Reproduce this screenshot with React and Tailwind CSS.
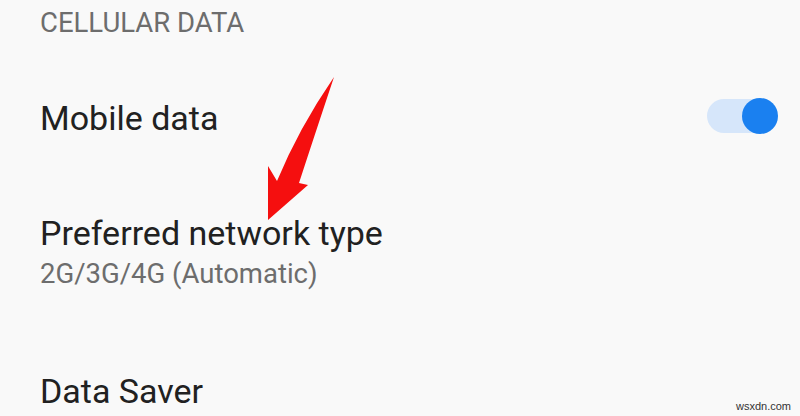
export default function App() {
  return (
    <div
      className="relative w-[800px] h-[416px] overflow-hidden bg-[#f9f9f9] pl-[40px]"
      style={{ fontFamily: 'Roboto, "Noto Sans", sans-serif' }}
    >
      {/* Section header */}
      <div className="pt-[7px] text-[27.5px] leading-[32px] text-[#6d6d6d]">CELLULAR DATA</div>

      {/* Mobile data row */}
      <div className="mt-[59px] flex items-start justify-between pr-[22px]">
        <div className="text-[34px] leading-[40px] text-[#212121]">Mobile data</div>
        <div className="relative w-[71px] h-[36px]">
          <div className="absolute left-0 top-[1px] w-[64px] h-[34px] rounded-full bg-[#d6e6fa]" />
          <div className="absolute right-0 top-0 w-[36px] h-[36px] rounded-full bg-[#1a80f0]" />
        </div>
      </div>

      {/* Preferred network type */}
      <div className="mt-[75px]">
        <div className="text-[34px] leading-[40px] text-[#212121]">Preferred network type</div>
        <div className="mt-[5px] text-[27.5px] leading-[32px] text-[#6d6d6d]">2G/3G/4G (Automatic)</div>
      </div>

      {/* Data Saver */}
      <div className="mt-[81px] text-[34px] leading-[40px] text-[#212121]">Data Saver</div>

      {/* red annotation arrow */}
      <svg className="absolute left-0 top-0" width="800" height="416" viewBox="0 0 800 416">
        <path
          d="M334 77 Q313 140 299 183 L308 185 L268 220 L268 166 L277 181 Q299 128 334 77 Z"
          fill="#f50f0f"
        />
      </svg>

      <div
        className="absolute right-[9px] bottom-[3px] text-[11px] leading-[13px] text-[#333]"
        style={{ fontFamily: '"Liberation Sans", Arial, sans-serif' }}
      >
        wsxdn.com
      </div>
    </div>
  );
}
